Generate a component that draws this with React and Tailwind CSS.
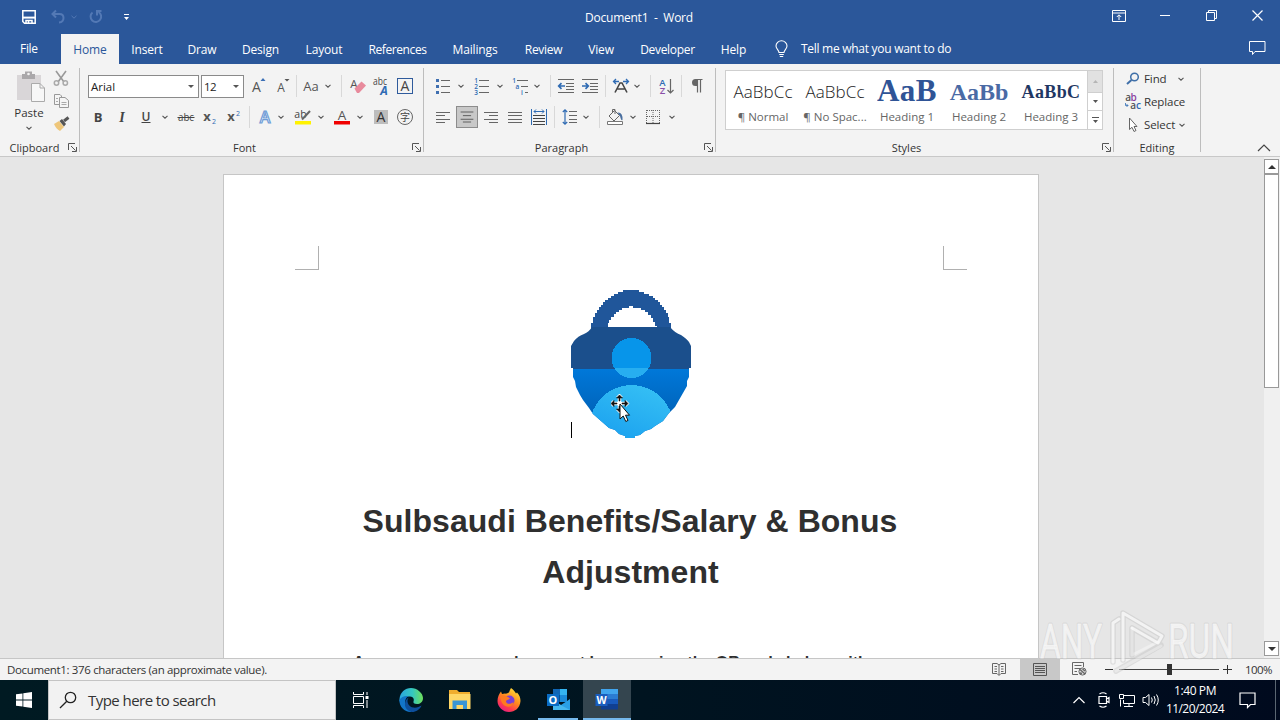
import React from "react";

const tabs = [
  { name: "Home", cls: "w-[58px] bg-[#f3f3f3] text-[#2b579a]" },
  { name: "Insert", cls: "w-[56px]" },
  { name: "Draw", cls: "w-[54px]" },
  { name: "Design", cls: "w-[63px]" },
  { name: "Layout", cls: "w-[64px]" },
  { name: "References", cls: "w-[83px] tracking-[-0.4px]" },
  { name: "Mailings", cls: "w-[72px]" },
  { name: "Review", cls: "w-[65px] tracking-[-0.3px]" },
  { name: "View", cls: "w-[50px]" },
  { name: "Developer", cls: "w-[83px] tracking-[-0.3px]" },
  { name: "Help", cls: "w-[49px]" },
];

const styleCards = [
  { sample: "AaBbCc", name: "¶ Normal", cls: "pt-[2px] text-[17px] font-light tracking-[0.1px] text-[#222]" },
  { sample: "AaBbCc", name: "¶ No Spac...", cls: "pt-[2px] text-[17px] font-light tracking-[0.1px] text-[#222]" },
  { sample: "AaB", name: "Heading 1", cls: "font-['Liberation_Serif',serif] text-[31px] font-bold tracking-[0.5px] text-[#2f5496]" },
  { sample: "AaBb", name: "Heading 2", cls: "pt-[3px] font-['Liberation_Serif',serif] text-[24px] font-bold text-[#4a6aa5]" },
  { sample: "AaBbC", name: "Heading 3", cls: "pt-[3px] font-['Liberation_Serif',serif] text-[18px] font-bold tracking-[0.4px] text-[#1f3763]" },
];

// 22px box shared by every small ribbon icon
function Icon({ className = "", children }) {
  return (
    <svg className={`h-[22px] w-[22px] shrink-0 ${className}`} viewBox="0 0 22 22" fill="none" stroke="#666" strokeWidth="1">
      {children}
    </svg>
  );
}

function Chevron({ className = "" }) {
  return (
    <svg className={`h-[6px] w-[6px] shrink-0 ${className}`} viewBox="0 0 6 6" fill="none" stroke="#555" strokeWidth="1.1">
      <path d="M0.5 1.8 3 4.2 5.5 1.8" />
    </svg>
  );
}

function Separator({ className = "" }) {
  return <div className={`h-[22px] w-px shrink-0 bg-[#d8d8d8] ${className}`}></div>;
}

function Glyph({ x = 11, y = 16, size = 14, fill = "#444", children, ...rest }) {
  return (
    <text x={x} y={y} fontSize={size} fill={fill} stroke="none" textAnchor="middle" {...rest}>
      {children}
    </text>
  );
}

function Launcher() {
  return (
    <svg className="h-[9px] w-[9px] shrink-0" viewBox="0 0 9 9" fill="none" stroke="#555">
      <path d="M0.5 7V0.5H7M3 3l4.5 4.5M8.500 4v4.500H4" />
    </svg>
  );
}

function Group({ label, width, labelCls = "", launcher = true, children }) {
  return (
    <div className={`flex shrink-0 flex-col ${width}`}>
      <div className="flex h-[74px] flex-col">{children}</div>
      <div className="flex h-[18px] items-center">
        <span className={`flex-1 text-center text-[11px] leading-none text-[#333] ${labelCls}`}>{label}</span>
        {launcher && (
          <div className="w-[11px] shrink-0">
            <Launcher />
          </div>
        )}
      </div>
    </div>
  );
}

function GroupLine() {
  return <div className="mt-1 h-[84px] w-px shrink-0 bg-[#bdbdbd]"></div>;
}

function TitleBar() {
  return (
    <div className="flex h-[34px] items-center text-white">
      <div className="flex w-[480px] items-center">
        <svg className="ml-[22px] h-[14px] w-[14px]" viewBox="0 0 14 14" fill="none" stroke="#fff" strokeWidth="1.5">
          <path d="M0.8 0.8H13.2V13.2H2.5L0.8 11.5Z" />
          <path d="M1 7.6H13" strokeWidth="2" />
          <path d="M4 13V10.5H10V13M6.5 11V13" />
        </svg>
        <svg className="ml-[15px] h-4 w-4" viewBox="0 0 16 16" fill="none" stroke="#5379b5" strokeWidth="2">
          <path d="M5 1.5 1.5 5 5 8.5M1.5 5H8.5Q12.500 5 12.500 9T8 13.500" />
        </svg>
        <svg className="ml-[4px] h-[6px] w-[6px]" viewBox="0 0 6 6" fill="none" stroke="#5379b5">
          <path d="M0.5 1.8 3 4.2 5.5 1.8" />
        </svg>
        <svg className="ml-[11px] h-4 w-4" viewBox="0 0 16 16" fill="none" stroke="#5379b5" strokeWidth="2">
          <path d="M4.500 3.500A5.300 5.300 0 1 0 10.500 3M9 6.500V2H13.500" />
        </svg>
        <svg className="ml-[19px] h-[8px] w-[7px]" viewBox="0 0 7 8" fill="#fff">
          <path d="M1 1H6V2H1ZM1 4H6L3.5 7Z" />
        </svg>
      </div>
      <div className="w-[318px] pt-[2px] text-center text-[12px] tracking-[-0.25px] whitespace-pre">Document1  -  Word</div>
      <div className="flex flex-1 items-center justify-end pb-[3px]">
        <svg className="mr-[34px] h-[12px] w-[14px]" viewBox="0 0 14 12" fill="none" stroke="#fff">
          <path d="M0.5 0.5H13.5V11.5H0.5ZM0.5 3H13.5M7 10V5M4.8 7 7 4.8 9.2 7" />
        </svg>
        <div className="mr-[36px] h-px w-[10px] bg-white"></div>
        <svg className="mr-[35px] h-[11px] w-[11px]" viewBox="0 0 11 11" fill="none" stroke="#fff">
          <path d="M0.5 2.5H8.5V10.5H0.5ZM2.5 2.5V0.5H10.5V8.5H8.5" />
        </svg>
        <svg className="mr-[17px] h-[11px] w-[11px]" viewBox="0 0 11 11" fill="none" stroke="#fff" strokeWidth="1.2">
          <path d="M0.5 0.5 10.5 10.5M10.5 0.5 0.5 10.5" />
        </svg>
      </div>
    </div>
  );
}

function TabBar() {
  return (
    <div className="flex h-[30px] text-[12px] tracking-[-0.15px] text-white">
      <div className="flex w-[61px] items-center pl-5 tracking-[-0.3px]">File</div>
      {tabs.map((t) => (
        <div key={t.name} className={`flex shrink-0 items-center justify-center pt-[2px] ${t.cls}`}>
          {t.name}
        </div>
      ))}
      <svg className="mt-[6px] ml-[17px] h-[18px] w-[13px]" viewBox="0 0 13 18" fill="none" stroke="#fff" strokeWidth="1.1">
        <path d="M4 12.5C4 10 1 9 1 6A5.5 5.2 0 0 1 12 6C12 9 9 10 9 12.5ZM4.2 14.5H8.8M4.8 16.5H8.2" />
      </svg>
      <div className="ml-[13px] flex flex-1 items-center tracking-[-0.28px]">Tell me what you want to do</div>
      <svg className="mt-[6px] mr-[14px] h-[16px] w-[18px]" viewBox="0 0 18 16" fill="none" stroke="#fff">
        <path d="M1.500 1.500H17V11.500H7L4.500 14.500V11.500H1.500Z" />
      </svg>
    </div>
  );
}

function ClipboardGroup() {
  return (
    <Group label="Clipboard" width="w-[79px]" labelCls="pl-[1px]">
      <div className="flex">
        <div className="flex w-[51px] flex-col items-center pl-[7px]">
          <svg className="mt-[7px] ml-[3px] h-[32px] w-[30px]" viewBox="0 0 30 32" fill="none">
            <path d="M1 4H25V29H1Z" fill="#d9d6d8" />
            <path d="M6 3H9V0.5H16V3H19V8H6Z" fill="#aaa8aa" />
            <circle cx="12.5" cy="3" r="1.3" fill="#f3f3f3" />
            <path d="M15.5 12.5H24L28.5 17V30.5H15.5Z" fill="#f7f7f7" stroke="#aaa" />
            <path d="M24 12.5V17H28.5" stroke="#aaa" />
          </svg>
          <span className="mt-[3px] text-[11.5px] leading-[13px] text-[#333]">Paste</span>
          <Chevron className="mt-[6px]" />
        </div>
        <div className="flex w-[22px] flex-col pt-[4px]">
          <Icon className="ml-[-1px]">
            <path d="M6 3 14 14M16 3 8 14" stroke="#999" strokeWidth="1.6" />
            <circle cx="6.5" cy="15" r="2.2" stroke="#aaa" strokeWidth="1.5" />
            <circle cx="15.3" cy="15" r="2.2" stroke="#aaa" strokeWidth="1.5" />
          </Icon>
          <Icon className="ml-[-1px]">
            <path d="M4.5 4.5H10L11.5 6V14.5H4.5Z" fill="#f5f5f5" stroke="#999" />
            <path d="M9.5 7.5H15L18.5 10.5V17.5H9.5Z" fill="#f5f5f5" stroke="#999" />
            <path d="M6 8.5H8M6 11.5H8M11.5 12.5H16.5M11.5 14.5H16.5" stroke="#aaa" />
          </Icon>
          <Icon className="mt-[1px]">
            <path d="M3 11 8 8 13 14 9 18Q5 16 3 11Z" fill="#eec67a" stroke="none" />
            <path d="M8.5 8 11 6 15 11 13 13.5Z" fill="#555" stroke="none" />
            <path d="M13 8 17.5 4.5" stroke="#555" strokeWidth="3" />
          </Icon>
        </div>
      </div>
    </Group>
  );
}

function FontGroup() {
  return (
    <Group label="Font" width="w-[343px]" labelCls="pr-[3px]">
      <div className="mt-[10px] flex h-[23px] items-center">
        <div className="mt-[2px] ml-[8px] flex h-[23px] w-[111px] items-center border border-[#8a8a8a] bg-white pr-[4px] pl-[2px] text-[11.5px] text-[#222]">
          <span className="flex-1">Arial</span>
          <svg className="h-[3px] w-[6px]" viewBox="0 0 6 3" fill="#555"><path d="M0 0H6L3 3Z" /></svg>
        </div>
        <div className="mt-[2px] ml-[2px] flex h-[23px] w-[43px] items-center border border-[#8a8a8a] bg-white pr-[4px] pl-[2px] text-[11.5px] text-[#222]">
          <span className="flex-1 tracking-[-0.5px]">12</span>
          <svg className="h-[3px] w-[6px]" viewBox="0 0 6 3" fill="#555"><path d="M0 0H6L3 3Z" /></svg>
        </div>
        <Icon className="ml-[3px]">
          <Glyph x="9.5" y="17" size="14" fill="#555" fontWeight="500">A</Glyph>
          <path d="M13.5 6H18.5L16 3Z" fill="#3b6fb5" stroke="none" />
        </Icon>
        <Icon className="ml-[3px]">
          <Glyph x="9" y="17" size="12" fill="#555" fontWeight="500">A</Glyph>
          <path d="M12.5 4H17.5L15 6.5Z" fill="#555" stroke="none" />
        </Icon>
        <Separator className="ml-[2px]" />
        <Icon className="ml-[3px]">
          <Glyph size="13" y="16" fill="#555">Aa</Glyph>
        </Icon>
        <Chevron className="ml-[3px]" />
        <Separator className="ml-[10px]" />
        <Icon className="ml-[5px]">
          <Glyph x="7" y="13" size="11.5" fill="#555">A</Glyph>
          <path d="M7.500 13.500 14.500 6.500 19 10.500 12 18H10Z" fill="#e88a9c" stroke="none" />
        </Icon>
        <Icon className="ml-[1px]">
          <Glyph x="10" y="10" size="10" fill="#444" textLength="14" lengthAdjust="spacingAndGlyphs">abc</Glyph>
          <Glyph x="14" y="20" size="12" fill="#2f6bb3" fontWeight="700" fontStyle="italic">A</Glyph>
        </Icon>
        <Icon className="ml-[2px]">
          <rect x="3.5" y="3.5" width="15" height="15" stroke="#2f5b9c" />
          <Glyph y="16" size="14" fill="#444" fontWeight="500">A</Glyph>
        </Icon>
      </div>
      <div className="mt-[9px] flex h-[22px] items-center">
        <Icon className="ml-[7px]"><Glyph size="13" y="15.5" fontWeight="700">B</Glyph></Icon>
        <Icon className="ml-[2px]"><Glyph size="14" y="15.5" fontWeight="700" fontStyle="italic" fontFamily="Liberation Serif, serif">I</Glyph></Icon>
        <Icon className="ml-[2px]">
          <Glyph size="12" y="14.5" fontWeight="600">U</Glyph>
          <path d="M6.5 16.5H15.5" stroke="#444" />
        </Icon>
        <Chevron className="ml-[5px]" />
        <Icon className="ml-[7px]">
          <Glyph size="11" y="15" textLength="16" lengthAdjust="spacingAndGlyphs">abc</Glyph>
          <path d="M2.5 11.5H19.5" stroke="#444" />
        </Icon>
        <Icon className="ml-[2px]">
          <Glyph x="8" size="13" y="15" fontWeight="700" fill="#555">x</Glyph>
          <Glyph x="15" size="7" y="17.5" fill="#2f6bb3">2</Glyph>
        </Icon>
        <Icon className="ml-[2px]">
          <Glyph x="8" size="13" y="15" fontWeight="700" fill="#555">x</Glyph>
          <Glyph x="15" size="7" y="10" fill="#2f6bb3">2</Glyph>
        </Icon>
        <Separator className="ml-[4px]" />
        <Icon className="ml-[4px]">
          <Glyph size="16" y="16.5" fill="#fff" fontWeight="600" style={{ stroke: "#6f9cd6", strokeWidth: 1.2 }}>A</Glyph>
        </Icon>
        <Chevron className="ml-[2px]" />
        <Icon className="ml-[8px]">
          <Glyph x="8.500" y="11.5" size="10.5">ab</Glyph>
          <path d="M10 13.5 18 5" stroke="#666" strokeWidth="2" />
          <path d="M3 15H19V18.500H3Z" fill="#fff200" stroke="none" />
        </Icon>
        <Chevron className="ml-[4px]" />
        <Icon className="ml-[7px]">
          <Glyph y="14" size="13.5" fill="#555" fontWeight="500">A</Glyph>
          <path d="M3 15H19V18.500H3Z" fill="#f00000" stroke="none" />
        </Icon>
        <Chevron className="ml-[4px]" />
        <Icon className="ml-[7px]">
          <path d="M4 4H18V18H4Z" fill="#bdbdbd" stroke="none" />
          <Glyph y="16" size="14" fill="#333" fontWeight="500">A</Glyph>
        </Icon>
        <Icon className="ml-[2px]">
          <circle cx="11" cy="11" r="7.5" />
          <Glyph size="10" y="14.7" fontFamily="Noto Sans CJK SC, sans-serif">字</Glyph>
        </Icon>
      </div>
    </Group>
  );
}

function ParagraphGroup() {
  return (
    <Group label="Paragraph" width="w-[291px]" labelCls="pr-[5px]">
      <div className="mt-[10px] flex h-[23px] items-center">
        <Icon className="ml-[8px]">
          <path d="M9 5.5H18M9 11.5H18M9 17.5H18" />
          <path d="M4 4H7V7H4ZM4 10H7V13H4ZM4 16H7V19H4Z" fill="#3f6fb0" stroke="none" />
        </Icon>
        <Chevron className="ml-[4px]" />
        <Icon className="ml-[7px]">
          <path d="M8 5.5H18M8 11.5H18M8 17.5H18" />
          <Glyph x="5" y="8" size="6.5" fill="#2f6bb3" fontWeight="600">1</Glyph>
          <Glyph x="5" y="14" size="6.5" fill="#2f6bb3" fontWeight="600">2</Glyph>
          <Glyph x="5" y="20" size="6.5" fill="#2f6bb3" fontWeight="600">3</Glyph>
        </Icon>
        <Chevron className="ml-[4px]" />
        <Icon className="ml-[7px]">
          <path d="M7 5.5H18M11 11.5H18M15 17.5H18" />
          <Glyph x="4" y="8" size="6.5" fill="#2f6bb3" fontWeight="600">1</Glyph>
          <Glyph x="7.5" y="14" size="6.5" fill="#2f6bb3" fontWeight="600">a</Glyph>
          <Glyph x="12" y="20" size="6.5" fill="#2f6bb3" fontWeight="600">i</Glyph>
        </Icon>
        <Chevron className="ml-[2px]" />
        <Separator className="ml-[10px]" />
        <Icon className="ml-[4px]">
          <path d="M3 4.5H19M11 8.5H19M11 11.5H19M11 14.5H19M3 17.5H19" />
          <path d="M10 11H4M6.5 8.2 3.7 11 6.5 13.8" stroke="#2f6bb3" strokeWidth="1.7" />
        </Icon>
        <Icon className="ml-[2px]">
          <path d="M3 4.5H19M11 8.5H19M11 11.5H19M11 14.5H19M3 17.5H19" />
          <path d="M3 11H9M6.5 8.2 9.3 11 6.5 13.8" stroke="#2f6bb3" strokeWidth="1.7" />
        </Icon>
        <Separator className="ml-[4px]" />
        <Icon className="ml-[4px]">
          <path d="M5 17.500 10 8H12L17 17.500M7.500 14H14.500" stroke="#444" strokeWidth="1.600" />
          <path d="M9 6.500H4M6 4 3.500 6.500 6 9M13 6.500H18M16 4 18.500 6.500 16 9" stroke="#2f6bb3" strokeWidth="1.3" />
        </Icon>
        <Chevron className="ml-[2px]" />
        <Separator className="ml-[10px]" />
        <Icon className="ml-[4px]">
          <Glyph x="7.5" y="10.5" size="9.5" fill="#2f6bb3" fontWeight="600">A</Glyph>
          <Glyph x="7.5" y="19" size="9.5" fill="#8a4fa8" fontWeight="600">Z</Glyph>
          <path d="M15.5 4V18M12.5 15 15.5 18 18.5 15" strokeWidth="1.2" />
        </Icon>
        <Separator className="ml-[4px]" />
        <Icon className="ml-[4px]">
          <path d="M10 4.5H16.5M11.5 4.5V17.5M14.5 4.5V17.5" strokeWidth="1.2" />
          <path d="M11 4H9.5A3.3 3.3 0 0 0 9.5 11H11Z" fill="#666" stroke="none" />
        </Icon>
      </div>
      <div className="mt-[9px] flex h-[22px] items-center">
        <Icon className="ml-[8px]"><path d="M4 6.5H18M4 9.5H13M4 13.5H18M4 16.5H13" /></Icon>
        <Icon className="ml-[2px] border border-[#8c8c8c] bg-[#c8c8c8]"><path d="M4 5.5H18M6.5 9.5H15.5M4 13.5H18M6.5 16.5H15.5" stroke="#555" /></Icon>
        <Icon className="ml-[2px]"><path d="M4 6.5H18M9 9.5H18M4 13.5H18M9 16.5H18" /></Icon>
        <Icon className="ml-[2px]"><path d="M4 6.5H18M4 9.5H18M4 13.5H18M4 16.5H18" /></Icon>
        <Icon className="ml-[2px]">
          <path d="M3.5 3V19M18.5 3V19M6 5.5H16M8 3.5 6 5.5 8 7.5M14 3.5 16 5.5 14 7.5" stroke="#2f6bb3" />
          <path d="M5 9.5H17M5 12.5H17M5 15.5H17M5 18.5H17" stroke="#444" />
        </Icon>
        <Separator className="ml-[4px]" />
        <Icon className="ml-[4px]">
          <path d="M10 5.5H18M10 9.5H18M10 13.5H18M10 16.5H18" />
          <path d="M6 4V18M3.8 6 6 3.8 8.2 6M3.8 16 6 18.2 8.2 16" stroke="#2f6bb3" strokeWidth="1.2" />
        </Icon>
        <Chevron className="ml-[2px]" />
        <Separator className="ml-[10px]" />
        <Icon className="ml-[4px]">
          <path d="M5 10 10.5 4.5 15.5 9.5 10 15ZM8.5 7V3.5H11V8" />
          <path d="M13.5 6.5Q19 6 18.5 14 17 15 16 10Z" fill="#4a6f9f" stroke="none" />
          <path d="M3.5 15.5H18.5V18.5H3.5Z" fill="#fff" stroke="#777" />
        </Icon>
        <Chevron className="ml-[4px]" />
        <Icon className="ml-[6px]">
          <path d="M4.5 4V17M11 4V17M17.5 4V17M5 4.5H17M5 10.5H17" strokeDasharray="1 1" />
          <path d="M4 17.5H18" stroke="#444" strokeWidth="1.2" />
        </Icon>
        <Chevron className="ml-[5px]" />
      </div>
    </Group>
  );
}

function StylesGroup() {
  return (
    <Group label="Styles" width="w-[397px]" labelCls="pr-[5px]">
      <div className="mt-[6px] ml-[9px] flex h-[60px] w-[378px] border border-[#cfcfcf] bg-white">
        <div className="flex flex-1 pl-[1px]">
          {styleCards.map((s) => (
            <div key={s.name} className="flex w-[72px] shrink-0 flex-col items-center">
              <div className="flex h-[39px] w-[60px] items-center justify-center overflow-hidden">
                <span className={`leading-[39px] ${s.cls}`}>{s.sample}</span>
              </div>
              <span className="text-[11.5px] leading-[13px] whitespace-nowrap text-[#666]">{s.name}</span>
            </div>
          ))}
        </div>
        <div className="flex w-[15px] flex-col border-l border-[#cfcfcf]">
          <div className="flex h-[21px] items-center justify-center bg-[#e1e1e1]">
            <svg className="h-[3px] w-[5px]" viewBox="0 0 5 3" fill="#b5b5b5"><path d="M0 3H5L2.5 0Z" /></svg>
          </div>
          <div className="flex h-[19px] items-center justify-center border-y border-[#cfcfcf]">
            <svg className="h-[3px] w-[5px]" viewBox="0 0 5 3" fill="#555"><path d="M0 0H5L2.5 3Z" /></svg>
          </div>
          <div className="flex flex-1 items-center justify-center">
            <svg className="h-[6px] w-[7px]" viewBox="0 0 7 6" fill="#555"><path d="M0 0H7V1H0ZM1 3H6L3.5 6Z" /></svg>
          </div>
        </div>
      </div>
    </Group>
  );
}

function EditingGroup() {
  return (
    <Group label="Editing" width="w-[86px]" launcher={false}>
      <div className="mt-[4px] flex flex-col gap-[1px] text-[11.5px] tracking-[-0.1px] text-[#333]">
        <div className="flex h-[22px] items-center">
          <Icon className="ml-[8px]">
            <circle cx="12.5" cy="9" r="3.8" stroke="#3f6fa8" strokeWidth="1.5" />
            <path d="M9.5 12 5 16" stroke="#3f6fa8" strokeWidth="2" />
          </Icon>
          <span className="w-[34px]">Find</span>
          <Chevron />
        </div>
        <div className="flex h-[22px] items-center">
          <Icon className="ml-[8px]">
            <Glyph x="6" y="9.500" size="10" fill="#555" fontWeight="600">a</Glyph>
            <Glyph x="11.500" y="9.500" size="10" fill="#8a3fa0" fontWeight="600">b</Glyph>
            <Glyph x="11" y="17.5" size="10" fill="#555" fontWeight="600">a</Glyph>
            <Glyph x="16.500" y="17.5" size="10" fill="#2f6bb3" fontWeight="600">c</Glyph>
            <path d="M3.500 12V14.500H6M4.500 13 6 14.500 4.500 16" stroke="#2f6bb3" strokeWidth="0.8" />
          </Icon>
          <span>Replace</span>
        </div>
        <div className="flex h-[22px] items-center">
          <Icon className="ml-[8px]">
            <path d="M7.5 4V15.5L10 13.3 12 17.5 14 16.5 12 12.5H15Z" fill="#fff" stroke="#666" />
          </Icon>
          <span className="w-[35px]">Select</span>
          <Chevron />
        </div>
      </div>
    </Group>
  );
}

function Ribbon() {
  return (
    <div className="flex h-[93px] border-b border-[#c8c8c8] bg-[#f3f3f3]">
      <ClipboardGroup />
      <GroupLine />
      <FontGroup />
      <GroupLine />
      <ParagraphGroup />
      <GroupLine />
      <StylesGroup />
      <GroupLine />
      <EditingGroup />
      <GroupLine />
      <div className="flex flex-1 items-end justify-end pr-[9px] pb-[4px]">
        <svg className="h-[8px] w-[14px]" viewBox="0 0 14 8" fill="none" stroke="#444" strokeWidth="1.2">
          <path d="M1 7 7 1 13 7" />
        </svg>
      </div>
    </div>
  );
}

function PadlockPicture() {
  return (
    <svg className="h-[148px] w-[120px]" viewBox="0 0 120 148" shapeRendering="crispEdges">
      <defs>
        <linearGradient id="body" x1="0" y1="0" x2="0" y2="1">
          <stop offset="0" stopColor="#0078d9" />
          <stop offset="0.7" stopColor="#0062b8" />
        </linearGradient>
        <linearGradient id="bust" x1="0.7" y1="0" x2="0.3" y2="1">
          <stop offset="0" stopColor="#35bff4" />
          <stop offset="0.6" stopColor="#1fa6f0" />
        </linearGradient>
        <clipPath id="shield">
          <path d="M21 37H99Q104 43 110 45 116 49 118 52L120 56V78H118V87L116 91V96L112 103 108 110 104 117 98 123 92 131 84 136 80 139 74 141 69 145 64 146V148H54V146L48 144 44 140 38 138 30 131 22 124 18 118 12 110 9 105 5 97 4 91 2 87V78H0V56L3 51Q7 46 13 44 18 42 21 37Z" />
        </clipPath>
        <clipPath id="lower">
          <path d="M0 78H120V148H0Z" />
        </clipPath>
      </defs>
      <path d="M20 40V33H22V27H24V23H26V20H28V17H30V15H32V12H34V10H37V8H40V6H43V4H47V2H52V0H68V2H73V4H78V6H82V8H84V10H87V12H89V15H91V17H93V20H95V23H97V27H98V33H100V40H86V36H84V32H82V28H80V25H77V22H74V20H70V18H62V16H58V18H51V20H48V22H45V24H43V27H40V30H38V33H37V40Z" fill="#20569a" />
      <g clipPath="url(#shield)">
        <path d="M0 36H120V79H0Z" fill="#1b4f8c" />
        <path d="M0 79H120V148H0Z" fill="url(#body)" />
        <circle cx="60.5" cy="137" r="42" fill="url(#bust)" />
      </g>
      <circle cx="60.5" cy="68" r="20" fill="#0795ea" />
      <circle cx="60.5" cy="68" r="20" fill="#27aef0" clipPath="url(#lower)" />
    </svg>
  );
}

function MovePointer() {
  return (
    <svg className="absolute top-[219px] left-[387px] h-[30px] w-[22px]" viewBox="0 0 22 30">
      <g fill="none" stroke="#fff" strokeWidth="3.5">
        <path d="M8.500 2V17M1 9.500H16" />
        <path d="M6.500 4 8.500 2 10.500 4M6.500 15 8.500 17 10.500 15M3 7.500 1 9.500 3 11.500M14 7.500 16 9.500 14 11.500" />
      </g>
      <path d="M8.500 1 11.500 4H9V7H8V4H5.500ZM8.500 18 5.500 15H8V12H9V15H11.500ZM0 9.500 3 6.500V9H6V10H3V12.500ZM17 9.500 14 12.500V10H11V9H14V6.500Z" fill="#111" stroke="#111" strokeWidth="0.6" />
      <path d="M9 10V25L12.2 22 14.8 27.5 17 26.4 14.5 21.2H18.5Z" fill="#fff" stroke="#111" />
    </svg>
  );
}

function Watermark() {
  return (
    <svg className="pointer-events-none absolute top-[605px] left-[1036px] h-[70px] w-[204px]" viewBox="0 0 204 70">
      <g fontFamily="Roboto, sans-serif" fontSize="49" strokeLinejoin="round">
        <g fill="none" stroke="#bdbdbd" strokeOpacity="0.3" strokeWidth="3">
          <text x="4" y="53" textLength="62" lengthAdjust="spacingAndGlyphs">ANY</text>
          <text x="132" y="53" textLength="66" lengthAdjust="spacingAndGlyphs">RUN</text>
        </g>
        <g fill="#fff" fillOpacity="0.6" stroke="#fff" strokeOpacity="0.45" strokeWidth="0.8">
          <text x="4" y="53" textLength="62" lengthAdjust="spacingAndGlyphs">ANY</text>
          <text x="132" y="53" textLength="66" lengthAdjust="spacingAndGlyphs">RUN</text>
        </g>
      </g>
      <g fill="none" strokeLinejoin="round" strokeLinecap="round">
        <path d="M77 57V18L83 14M87 55V8L126 31 122 38 96 23V50M80 66 125 40" stroke="#bdbdbd" strokeOpacity="0.4" strokeWidth="5.5" />
        <path d="M77 57V18L83 14M87 55V8L126 31 122 38 96 23" stroke="#fff" strokeOpacity="0.7" strokeWidth="3" />
        <path d="M96 23V50L122 37M80 66 125 41" stroke="#fff" strokeOpacity="0.35" strokeWidth="3" />
      </g>
    </svg>
  );
}

function DocumentArea() {
  return (
    <div className="flex h-[501px] overflow-hidden bg-[#e6e6e6]">
      <div className="flex flex-1 pt-[17px] pl-[223px]">
        <div className="relative flex h-[520px] w-[816px] flex-col border border-[#c6c6c6] bg-white">
          <div className="mt-[71px] flex h-[24px] shrink-0 justify-between px-[71px]">
            <div className="w-[24px] border-r border-b border-[#b0b0b0]"></div>
            <div className="w-[24px] border-b border-l border-[#b0b0b0]"></div>
          </div>
          <div className="mt-[20px] ml-[347px] flex items-end">
            <div className="mr-[-1px] h-[16px] w-px bg-black"></div>
            <PadlockPicture />
          </div>
          <h1 className="mt-[58px] pr-[2px] text-center font-['Liberation_Sans',Arial,sans-serif] text-[32px] leading-[51px] font-bold tracking-[0.04px] text-[#2f2f2f]">
            Sulbsaudi Benefits/Salary &amp; Bonus
            <br />
            <span className="pl-px">Adjustment</span>
          </h1>
          <p className="mt-[55px] pl-[129px] font-['Liberation_Sans',Arial,sans-serif] text-[16px] leading-[20px] font-bold whitespace-nowrap text-[#2f2f2f]">
            Access your secure document by scanning the QR code below with your
          </p>
          <MovePointer />
        </div>
      </div>
      <div className="flex w-[16px] flex-col bg-[#f0f0f0] pt-[2px] pr-[1px] pb-[2px]">
        <div className="flex h-[15px] items-center justify-center border border-[#999] bg-white">
          <svg className="h-[4px] w-[8px]" viewBox="0 0 8 4" fill="#333"><path d="M0 4H8L4 0Z" /></svg>
        </div>
        <div className="h-[214px] border border-[#999] bg-white"></div>
        <div className="flex-1"></div>
        <div className="flex h-[15px] items-center justify-center border border-[#999] bg-white">
          <svg className="h-[4px] w-[8px]" viewBox="0 0 8 4" fill="#333"><path d="M0 0H8L4 4Z" /></svg>
        </div>
      </div>
    </div>
  );
}

function StatusBar() {
  return (
    <div className="flex h-[22px] items-center border-t border-[#c6c6c6] bg-[#f3f3f3] text-[11.5px] text-[#333]">
      <span className="w-[988px] pl-[7px] tracking-[-0.35px]">Document1: 376 characters (an approximate value).</span>
      <Icon>
        <path d="M4.5 4.5H9L11 6 13 4.5H17.5V14.5H13L11 16.5 9 14.5H4.5ZM11 6V16M6.5 7.5H9M6.5 10H9M6.5 12.5H9M13 7.5H15.5M13 10H15.5M13 12.5H15.5" />
      </Icon>
      <div className="ml-[10px] flex h-[21px] w-[40px] items-center justify-center bg-[#c8c8c8]">
        <Icon><path d="M4.5 4.5H17.5V16.5H4.5ZM6 7.5H16M6 9.5H16M6 11.5H16M6 13.5H16" stroke="#555" /></Icon>
      </div>
      <Icon className="ml-[8px]">
        <path d="M10 15.5H4.5V3.5H15.5V8M6.5 6.5H13.5M6.5 9.500H12M6.5 12.5H9" />
        <circle cx="14.500" cy="12.500" r="3.600" fill="#ddd" />
        <path d="M12 10.500 17 15M12 14 14 14.500M14.500 10 17 12" strokeWidth="1.300" />
      </Icon>
      <div className="ml-[15px] h-px w-[8px] bg-[#333]"></div>
      <div className="ml-[6px] flex w-[100px] items-center justify-center">
        <div className="h-px flex-1 bg-[#444]"></div>
        <div className="h-[11px] w-[5px] bg-[#333]"></div>
        <div className="h-px flex-1 bg-[#444]"></div>
      </div>
      <svg className="ml-[4px] h-[9px] w-[9px]" viewBox="0 0 9 9" stroke="#333"><path d="M0 4.5H9M4.5 0V9" /></svg>
      <span className="ml-[13px] tracking-[-0.6px]">100%</span>
    </div>
  );
}

function EdgeLogo() {
  return (
    <svg className="h-6 w-6" viewBox="0 0 24 24">
      <defs>
        <linearGradient id="edgeTop" x1="0" y1="0.5" x2="1" y2="0.5">
          <stop offset="0" stopColor="#2aa5e0" />
          <stop offset="0.55" stopColor="#35c8c0" />
          <stop offset="1" stopColor="#6fe05a" />
        </linearGradient>
      </defs>
      <path d="M0.5 11C1 4.500 6 0 12 0S24 5 24 10C24 14 21 16 18 16S14 14.500 14.500 13.500 15.500 9 11 8.500C5 8 0.500 11 0.500 15Z" fill="url(#edgeTop)" />
      <path d="M0.500 12C2 8.500 6 7.500 9.500 8 7 9.500 5.500 12.500 6.500 16.500S11 23 13.500 23.800C6 25 0 19 0.500 12Z" fill="#1275c8" />
      <path d="M10 9.500C7 12 8.500 18.500 14 19.500 17.500 20 20 19 22.500 17.500 21 21.500 17 24 13 24 8 23 5.500 19 6 15.500 6.500 12.500 8 10 10 9.500Z" fill="#0d4f9c" />
    </svg>
  );
}

function FirefoxLogo() {
  return (
    <svg className="h-6 w-6" viewBox="0 0 24 24">
      <defs>
        <linearGradient id="fox" x1="0.8" y1="0" x2="0.2" y2="1">
          <stop offset="0" stopColor="#ffe23a" />
          <stop offset="0.45" stopColor="#ff8a1e" />
          <stop offset="0.75" stopColor="#ff3a50" />
          <stop offset="1" stopColor="#e01a8a" />
        </linearGradient>
      </defs>
      <path d="M14 0C17 2 18 4 19 5.500L20 4.500C22.500 7 23.500 10 23.500 13 23 20 18 24 12 24S0.500 19 0.500 13C0.500 9 2 6 4 3.500L5 6 8 5.500C9 6 11 5 12 4.500 12.500 3 13 1.500 14 0Z" fill="url(#fox)" />
      <circle cx="12.500" cy="12.500" r="5" fill="#7a3fd6" />
      <path d="M3 8.500C6 6.500 9 8 11 9L13 10.500C11 12 9 12 9 13.500 9.500 16.500 14 16.500 16.500 14 16 18.500 12 19 9.500 18.500 5 17 4 13 3 8.500Z" fill="#ff7a20" />
    </svg>
  );
}

function Taskbar() {
  return (
    <div className="flex h-[40px] bg-linear-to-r from-[#001a22] via-[#001420] to-[#000a1e] text-white">
      <div className="flex w-[48px] items-center justify-center">
        <svg className="h-[16px] w-[16px]" viewBox="0 0 16 16" fill="#fff">
          <path d="M0 2.300 6.500 1.400V7.600H0ZM7.300 1.300 16 0V7.600H7.300ZM0 8.400H6.500V14.600L0 13.700ZM7.300 8.400H16V16L7.300 14.700Z" />
        </svg>
      </div>
      <div className="flex w-[288px] items-center border border-[#c4c4c4] bg-[#f2f2f2]">
        <svg className="ml-[10px] h-[18px] w-[18px]" viewBox="0 0 18 18" fill="none" stroke="#222" strokeWidth="1.300">
          <circle cx="11.500" cy="6.500" r="5.200" />
          <path d="M7.800 10.300 1 17" />
        </svg>
        <span className="ml-[11px] text-[15px] tracking-[-0.55px] text-[#333]">Type here to search</span>
      </div>
      <div className="flex w-[48px] items-center justify-center">
        <svg className="h-[16px] w-[17px]" viewBox="0 0 17 16" fill="none" stroke="#fff">
          <path d="M1.500 0V2.500H11.500V0M1.500 4.500H11.500V11.500H1.500ZM1.500 16V13.500H11.500V16M15 0V3M15 8V16" />
          <path d="M13.500 4H16.500V7H13.500Z" fill="#fff" stroke="none" />
        </svg>
      </div>
      <div className="ml-[3px] flex w-[48px] items-center justify-center"><EdgeLogo /></div>
      <div className="ml-[1px] flex w-[48px] items-center justify-center">
        <svg className="h-[20px] w-[22px]" viewBox="0 0 22 20">
          <path d="M0 0H8L10 2H21V19H0Z" fill="#f0ad2e" />
          <path d="M0 4H21.500V19H0Z" fill="#ffd766" />
          <path d="M3.500 10.500H18V19H14V15H7.500V19H3.500Z" fill="#3a95d4" />
        </svg>
      </div>
      <div className="ml-[1px] flex w-[48px] items-center justify-center"><FirefoxLogo /></div>
      <div className="ml-[5px] flex w-[40px] flex-col items-center">
        <svg className="mt-[8px] h-[24px] w-[24px]" viewBox="0 0 24 24">
          <path d="M7 1H21V14H7Z" fill="#1066b5" />
          <path d="M14 1H21V7H14Z" fill="#35b4f0" />
          <path d="M7 7H14V14H7Z" fill="#0a4f94" />
          <path d="M14 7H21V14H14Z" fill="#1b8ad8" />
          <path d="M7 12 15 17 24 11V22H7Z" fill="#2aa0e6" />
          <path d="M7 13 24 22H7Z" fill="#46b8ef" />
          <path d="M1 6H13V18H1Z" fill="#0a6cc4" />
          <text x="7" y="16" fontSize="11" fontWeight="700" fill="#fff" textAnchor="middle">O</text>
        </svg>
        <div className="mt-[6px] h-[2px] w-[40px] bg-[#76b9ed]"></div>
      </div>
      <div className="ml-[5px] flex w-[48px] flex-col items-center bg-[#34454f]">
        <svg className="mt-[8px] h-[24px] w-[24px]" viewBox="0 0 24 24">
          <path d="M6 1H23V6H6Z" fill="#41a5ee" />
          <path d="M6 6H23V11H6Z" fill="#2b7cd3" />
          <path d="M6 11H23V16H6Z" fill="#185abd" />
          <path d="M6 16H23V21.500H6Z" fill="#103f91" />
          <path d="M0.500 6H12.500V18H0.500Z" fill="#1a5dbe" />
          <text x="6.500" y="16" fontSize="10.500" fontWeight="700" fill="#fff" textAnchor="middle">W</text>
        </svg>
        <div className="mt-[6px] h-[2px] w-[48px] bg-[#76b9ed]"></div>
      </div>
      <div className="flex flex-1 items-center justify-end">
        <svg className="h-[8px] w-[12px]" viewBox="0 0 12 8" fill="none" stroke="#fff" strokeWidth="1.200">
          <path d="M0.500 7 6 1.500 11.500 7" />
        </svg>
        <svg className="ml-[12px] h-[18px] w-[14px]" viewBox="0 0 14 18" fill="none" stroke="#fff">
          <path d="M2 5.500H9.500V12.500H2ZM9.500 8 12 6.500V11.500L9.500 10M2.500 3Q6 0.500 9.500 3M2.500 15Q6 17.500 9.500 15" strokeWidth="1.200" />
        </svg>
        <svg className="ml-[7px] h-[16px] w-[18px]" viewBox="0 0 18 16" fill="none" stroke="#fff">
          <path d="M6 3.500H16.500V11.500H5.500V8M11 12V14.500M6 14.500H15M2.500 7.500V14.500" />
          <path d="M1.500 2.500H5.500V6.500H1.500Z" />
        </svg>
        <svg className="ml-[6px] h-[16px] w-[18px]" viewBox="0 0 18 16" fill="none" stroke="#fff">
          <path d="M1 5.500H3.500L7 2.500V13.500L3.500 10.500H1ZM9.500 5.500Q11 8 9.500 10.500M12 4Q14.500 8 12 12M14.500 2.500Q18 8 14.500 13.500" />
        </svg>
        <div className="ml-[2px] w-[66px] text-center text-[12px] leading-[18px] tracking-[-0.4px]">
          <div>1:40 PM</div>
          <div className="tracking-[-0.55px]">11/20/2024</div>
        </div>
        <svg className="mt-[1px] ml-[11px] h-[17px] w-[17px]" viewBox="0 0 17 17" fill="none" stroke="#fff" strokeWidth="1.200">
          <path d="M1 1H16V12.500H11.500L8.500 15.500V12.500H1Z" />
        </svg>
        <div className="mr-[4px] ml-[19px] h-[40px] w-px bg-[#5a6672]"></div>
      </div>
    </div>
  );
}

function App() {
  return (
    <div className="relative h-[720px] w-[1280px] overflow-hidden font-['Open_Sans','Noto_Sans',sans-serif]">
      <div className="bg-[#2b579a]">
        <TitleBar />
        <TabBar />
      </div>
      <Ribbon />
      <DocumentArea />
      <StatusBar />
      <Taskbar />
      <Watermark />
    </div>
  );
}

export default App;
